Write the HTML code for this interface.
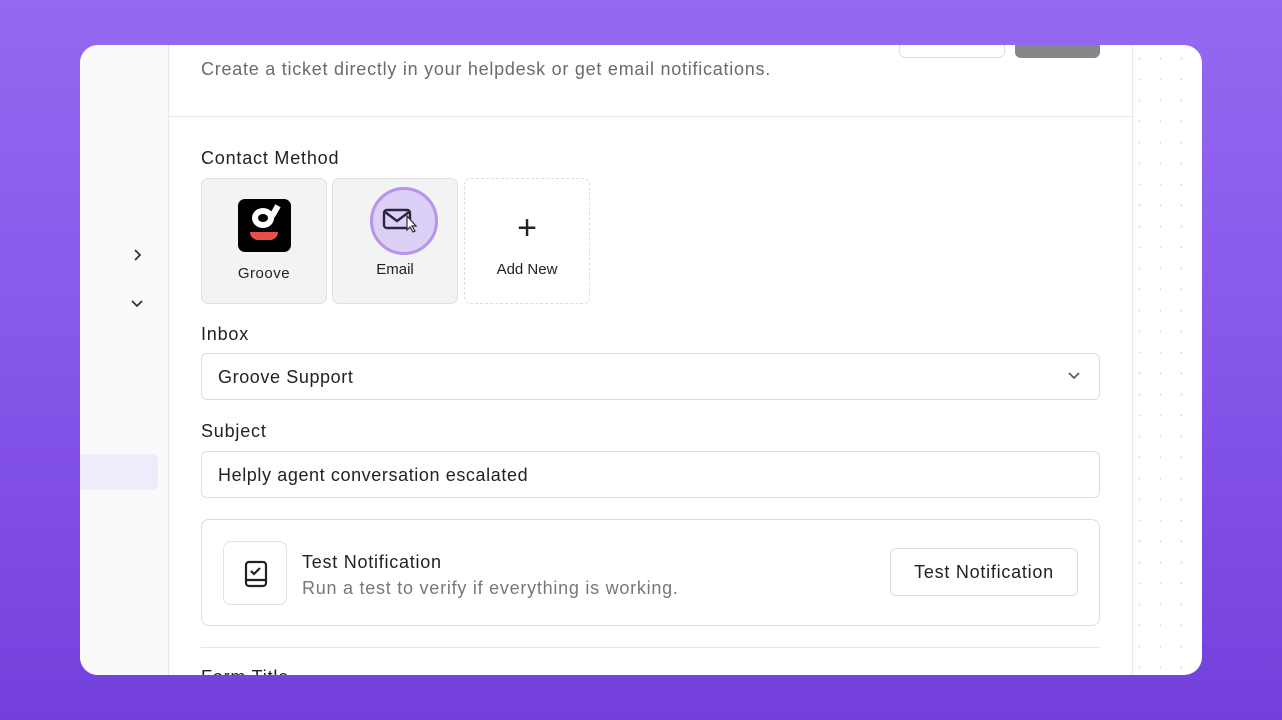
<!DOCTYPE html>
<html><head><style>
*{box-sizing:border-box;margin:0;padding:0}
body{width:1282px;height:720px;overflow:hidden;font-family:"Liberation Sans",sans-serif;background:linear-gradient(180deg,#9569f0 0%,#8656ea 50%,#7440dc 100%);position:relative}
.card{position:absolute;left:80px;top:45px;width:1122px;height:630px;background:#fff;border-radius:18px;overflow:hidden}
.side{position:absolute;left:0;top:0;width:89px;height:630px;background:#fafafa;border-right:1px solid #e8e8e8}
.right{position:absolute;left:1052px;top:0;width:70px;height:630px;border-left:1px solid #e8e8e8;background-image:radial-gradient(circle,#dedede 1px,transparent 1.3px);background-size:21px 21px;background-position:-4px 3px}
.abs{position:absolute}
.lbl{font-size:18px;color:#222;letter-spacing:0.8px}
.ls{letter-spacing:0.75px}
.tile{position:absolute;top:133px;width:126px;height:126px;border-radius:7px;background:#f2f3f3;border:1px solid #e0e0e0;text-align:center;font-size:15px;color:#222}
.input{position:absolute;left:121px;width:899px;height:47px;border:1px solid #ddd;border-radius:6px;font-size:18px;color:#222;padding:13px 16px;letter-spacing:0.6px}
</style></head><body>
<div class="card">
<div class="side">
<div class="abs" style="left:0;top:409px;width:78px;height:36px;background:#efebfb;border-radius:0 6px 6px 0"></div>
<svg class="abs" style="left:50px;top:203px" width="14" height="14" viewBox="0 0 14 14"><path d="M5 2l5 5-5 5" fill="none" stroke="#333" stroke-width="1.8"/></svg>
<svg class="abs" style="left:50px;top:251px" width="14" height="14" viewBox="0 0 14 14"><path d="M2 5l5 5 5-5" fill="none" stroke="#333" stroke-width="1.8"/></svg>
</div>
<div class="abs" style="left:819px;top:-6px;width:106px;height:19px;border:1px solid #ddd;border-radius:6px;background:#fff"></div>
<div class="abs" style="left:935px;top:-6px;width:85px;height:19px;border-radius:6px;background:#878787"></div>
<div class="abs ls" style="left:121px;top:14px;font-size:18px;color:#6b6b6b">Create a ticket directly in your helpdesk or get email notifications.</div>
<div class="abs" style="left:89px;top:71px;width:963px;border-top:1px solid #e6e6e6"></div>
<div class="abs lbl" style="left:121px;top:103px">Contact Method</div>
<div class="tile" style="left:121px"><div style="margin:20px auto 0;width:53px;height:53px;background:#000;border-radius:7px;position:relative"><div style="position:absolute;left:14px;top:9px;width:22px;height:20px;border:6px solid #fff;border-radius:50%"></div><div style="position:absolute;left:34px;top:6px;width:6px;height:12px;background:#fff;transform:rotate(30deg)"></div><div style="position:absolute;left:12px;top:33px;width:28px;height:8px;background:#e8504a;border-radius:0 0 14px 14px"></div></div><div style="margin-top:13px;letter-spacing:0.5px">Groove</div></div>
<div class="tile" style="left:252px"><div style="margin:8px 0 0 37px;width:68px;height:68px;border-radius:50%;background:#ddd0f6;border:3px solid #b593ee;position:relative"><svg style="position:absolute;left:8px;top:14px" width="40" height="34" viewBox="0 0 40 34"><rect x="3" y="6" width="26" height="18" rx="3" fill="none" stroke="#2a2540" stroke-width="2.4"/><path d="M4 8l12 9 12-9" fill="none" stroke="#2a2540" stroke-width="2.4"/><path d="M26 12l0 14 3-3 3 5 2-1-3-5 4 0z" fill="#fff" stroke="#2a2540" stroke-width="1.2"/></svg></div><div style="margin-top:6px">Email</div></div>
<div class="tile" style="left:384px;background:#fff;border:1px dashed #ddd"><div style="margin-top:32px;font-size:34px;font-weight:300;line-height:34px">+</div><div style="margin-top:16px">Add New</div></div>
<div class="abs lbl" style="left:121px;top:279px">Inbox</div>
<div class="input" style="top:308px">Groove Support<svg style="position:absolute;right:18px;top:17px" width="14" height="10" viewBox="0 0 14 10"><path d="M2 2l5 5 5-5" fill="none" stroke="#555" stroke-width="1.6"/></svg></div>
<div class="abs lbl" style="left:121px;top:376px">Subject</div>
<div class="input" style="top:406px">Helply agent conversation escalated</div>
<div class="abs" style="left:121px;top:474px;width:899px;height:107px;border:1px solid #ddd;border-radius:8px">
<div class="abs" style="left:21px;top:21px;width:64px;height:64px;border:1px solid #e2e2e2;border-radius:8px"><svg style="position:absolute;left:19px;top:18px" width="26" height="28" viewBox="0 0 26 28"><rect x="3" y="2" width="20" height="24" rx="3" fill="none" stroke="#222" stroke-width="2.2"/><path d="M3 20h20" stroke="#222" stroke-width="2.2"/><path d="M8 11l3 3 6-6" fill="none" stroke="#222" stroke-width="2.2"/></svg></div>
<div class="abs ls" style="left:100px;top:32px;font-size:18px;color:#222">Test Notification</div>
<div class="abs ls" style="left:100px;top:58px;font-size:18px;color:#777">Run a test to verify if everything is working.</div>
<div class="abs ls" style="left:688px;top:28px;width:188px;height:48px;border:1px solid #ddd;border-radius:6px;font-size:18px;color:#222;text-align:center;line-height:46px">Test Notification</div>
</div>
<div class="abs" style="left:121px;top:602px;width:899px;border-top:1px solid #e6e6e6"></div>
<div class="abs lbl" style="left:121px;top:622px">Form Title</div>
<div class="right"></div>
</div>
</body></html>
